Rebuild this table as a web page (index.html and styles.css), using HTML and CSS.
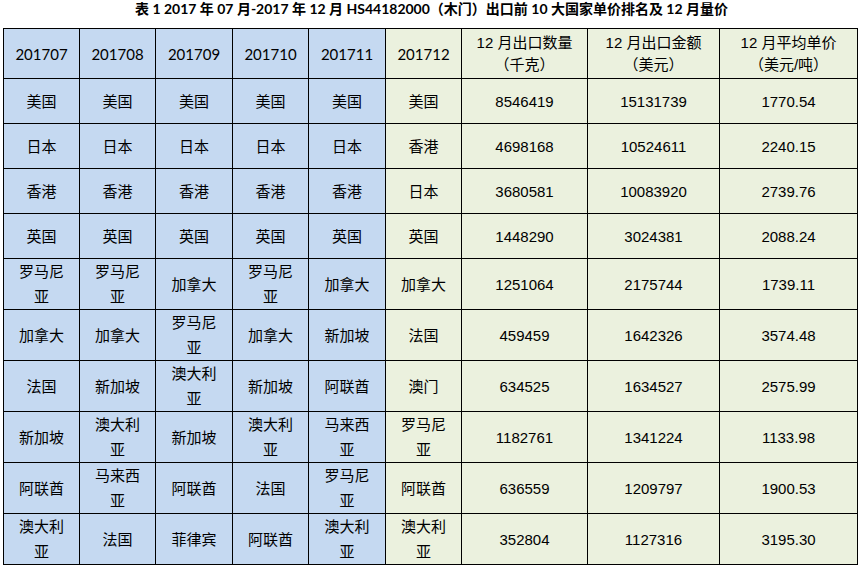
FILE: index.html
```html
<!DOCTYPE html>
<html lang="zh-CN">
<head>
<meta charset="utf-8">
<title>木门出口前10大国家单价排名</title>
<link rel="stylesheet" href="styles.css">
</head>
<body>
<div class="page">
  <div class="title">表 1 2017 年 07 月-2017 年 12 月 HS44182000（木门）出口前 10 大国家单价排名及 12 月量价</div>
  <table class="grid">
    <colgroup>
      <col class="c-m"><col class="c-m2"><col class="c-m3"><col class="c-m"><col class="c-m3"><col class="c-m">
      <col class="c-q"><col class="c-v"><col class="c-p">
    </colgroup>
    <thead>
      <tr class="hd">
        <th class="b ym">201707</th><th class="b ym">201708</th><th class="b ym">201709</th><th class="b ym">201710</th><th class="b ym">201711</th>
        <th class="g ym">201712</th>
        <th class="g">12 月出口数量<br>（千克）</th>
        <th class="g">12 月出口金额<br>（美元）</th>
        <th class="g">12 月平均单价<br>（美元/吨）</th>
      </tr>
    </thead>
    <tbody>
      <tr class="s45">
        <td class="b">美国</td><td class="b">美国</td><td class="b">美国</td><td class="b">美国</td><td class="b">美国</td><td class="g">美国</td>
        <td class="g n">8546419</td><td class="g n">15131739</td><td class="g n">1770.54</td>
      </tr>
      <tr class="s45">
        <td class="b">日本</td><td class="b">日本</td><td class="b">日本</td><td class="b">日本</td><td class="b">日本</td><td class="g">香港</td>
        <td class="g n">4698168</td><td class="g n">10524611</td><td class="g n">2240.15</td>
      </tr>
      <tr class="s45">
        <td class="b">香港</td><td class="b">香港</td><td class="b">香港</td><td class="b">香港</td><td class="b">香港</td><td class="g">日本</td>
        <td class="g n">3680581</td><td class="g n">10083920</td><td class="g n">2739.76</td>
      </tr>
      <tr class="s45">
        <td class="b">英国</td><td class="b">英国</td><td class="b">英国</td><td class="b">英国</td><td class="b">英国</td><td class="g">英国</td>
        <td class="g n">1448290</td><td class="g n">3024381</td><td class="g n">2088.24</td>
      </tr>
      <tr class="d51">
        <td class="b">罗马尼亚</td><td class="b">罗马尼亚</td><td class="b">加拿大</td><td class="b">罗马尼亚</td><td class="b">加拿大</td><td class="g">加拿大</td>
        <td class="g n">1251064</td><td class="g n">2175744</td><td class="g n">1739.11</td>
      </tr>
      <tr class="d50">
        <td class="b">加拿大</td><td class="b">加拿大</td><td class="b">罗马尼亚</td><td class="b">加拿大</td><td class="b">新加坡</td><td class="g">法国</td>
        <td class="g n">459459</td><td class="g n">1642326</td><td class="g n">3574.48</td>
      </tr>
      <tr class="d51">
        <td class="b">法国</td><td class="b">新加坡</td><td class="b">澳大利亚</td><td class="b">新加坡</td><td class="b">阿联酋</td><td class="g">澳门</td>
        <td class="g n">634525</td><td class="g n">1634527</td><td class="g n">2575.99</td>
      </tr>
      <tr class="d51">
        <td class="b">新加坡</td><td class="b">澳大利亚</td><td class="b">新加坡</td><td class="b">澳大利亚</td><td class="b">马来西亚</td><td class="g">罗马尼亚</td>
        <td class="g n">1182761</td><td class="g n">1341224</td><td class="g n">1133.98</td>
      </tr>
      <tr class="d50">
        <td class="b">阿联酋</td><td class="b">马来西亚</td><td class="b">阿联酋</td><td class="b">法国</td><td class="b">罗马尼亚</td><td class="g">阿联酋</td>
        <td class="g n">636559</td><td class="g n">1209797</td><td class="g n">1900.53</td>
      </tr>
      <tr class="d51">
        <td class="b">澳大利亚</td><td class="b">法国</td><td class="b">菲律宾</td><td class="b">阿联酋</td><td class="b">澳大利亚</td><td class="g">澳大利亚</td>
        <td class="g n">352804</td><td class="g n">1127316</td><td class="g n">3195.30</td>
      </tr>
    </tbody>
  </table>
</div>
</body>
</html>
```
FILE: styles.css
```css
html, body {
  margin: 0;
  padding: 0;
  background: #ffffff;
}

.page {
  width: 863px;
  height: 572px;
  padding: 0 0 0 3px;
  box-sizing: border-box;
  font-family: "Liberation Sans", "Noto Sans CJK SC", sans-serif;
  color: #000;
}

.title {
  height: 28px;
  line-height: 18px;
  text-align: center;
  font-family: "Lato", "Noto Sans CJK SC", sans-serif;
  font-weight: 700;
  font-size: 14px;
  padding-right: 3px;
  box-sizing: border-box;
}

.grid {
  border-collapse: collapse;
  table-layout: fixed;
  width: 855px;
}

.c-m { width: 76px; }
.c-m2 { width: 76px; }
.c-m3 { width: 77px; }
.c-q { width: 126px; }
.c-v { width: 132px; }
.c-p { width: 138px; }

.grid th,
.grid td {
  border: 1px solid #000;
  padding: 0 10px;
  text-align: center;
  vertical-align: middle;
  font-weight: 400;
  font-size: 15px;
  line-height: 25px;
}

.grid th {
  line-height: 22px;
  padding: 0 2px;
}

.b { background: #c5d9f1; }
.g { background: #ebf1de; }

.ym {
  font-family: "Lato", sans-serif;
  font-size: 13.5px;
}

.n {
  font-family: "Liberation Sans", sans-serif;
  font-size: 16px;
}

.hd { height: 50px; }
.s45 { height: 45px; }
.d51 { height: 51px; }
.d50 { height: 50px; }
```
